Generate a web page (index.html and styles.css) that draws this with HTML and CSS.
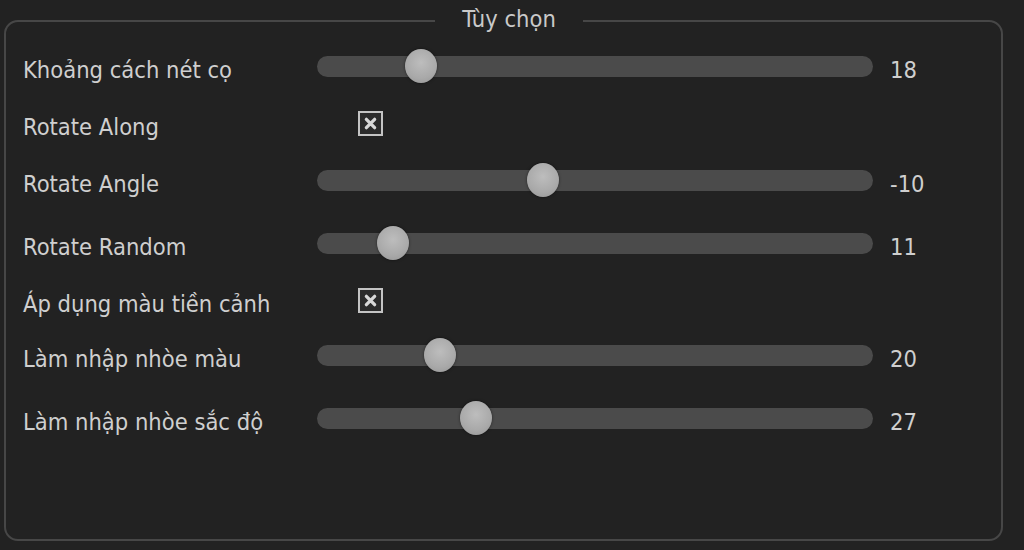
FILE: index.html
```html
<!DOCTYPE html>
<html lang="vi">
<head>
<meta charset="utf-8">
<title>Tùy chọn</title>
<link rel="stylesheet" href="styles.css">
</head>
<body>
<div class="panel">
  <div class="title">Tùy chọn</div>
  <div class="rows">
    <div class="label">Khoảng cách nét cọ</div>
    <div class="track"><span class="knob" style="left:18.7%"></span></div>
    <div class="value">18</div>

    <div class="label">Rotate Along</div>
    <div class="check-cell"><span class="check"><svg viewBox="0 0 20 20" width="20" height="20"><path d="M4.5 4.5 L15.5 15.5 M15.5 4.5 L4.5 15.5" stroke="#d8d8d8" stroke-width="4.4" stroke-linecap="round"/></svg></span></div>
    <div class="value"></div>

    <div class="label">Rotate Angle</div>
    <div class="track"><span class="knob" style="left:40.6%"></span></div>
    <div class="value">-10</div>

    <div class="label">Rotate Random</div>
    <div class="track"><span class="knob" style="left:13.7%"></span></div>
    <div class="value">11</div>

    <div class="label">Áp dụng màu tiền cảnh</div>
    <div class="check-cell"><span class="check"><svg viewBox="0 0 20 20" width="20" height="20"><path d="M4.5 4.5 L15.5 15.5 M15.5 4.5 L4.5 15.5" stroke="#d8d8d8" stroke-width="4.4" stroke-linecap="round"/></svg></span></div>
    <div class="value"></div>

    <div class="label">Làm nhập nhòe màu</div>
    <div class="track"><span class="knob" style="left:22.1%"></span></div>
    <div class="value">20</div>

    <div class="label">Làm nhập nhòe sắc độ</div>
    <div class="track"><span class="knob" style="left:28.6%"></span></div>
    <div class="value">27</div>
  </div>
</div>
</body>
</html>
```
FILE: styles.css
```css
html, body {
  margin: 0;
  padding: 0;
  background: #222222;
}
body {
  width: 1024px;
  height: 550px;
  overflow: hidden;
  font-family: "DejaVu Sans Condensed", "DejaVu Sans", sans-serif;
  font-size: 23.5px;
  color: #cfcfcf;
}
.panel {
  position: relative;
  box-sizing: border-box;
  margin: 20px 0 0 4px;
  width: 999px;
  height: 521px;
  border: 2px solid #474747;
  border-radius: 14px;
  padding: 15.5px 0 0 17px;
}
.title {
  position: absolute;
  top: -18px;
  left: 429px;
  width: 148px;
  text-align: center;
  background: #222222;
  color: #c9c9c9;
  line-height: 30px;
}
.rows {
  display: grid;
  grid-template-columns: 294px 556px auto;
  grid-template-rows: 57px 57px 57px 69px 45px 65px 61px;
  column-gap: 0;
  align-items: center;
}
.label {
  padding-top: 7px;
  white-space: nowrap;
}
.value {
  padding-top: 7px;
  padding-left: 17px;
}
.track {
  position: relative;
  height: 21px;
  border-radius: 10.5px;
  background: #4b4b4b;
}
.knob {
  position: absolute;
  top: 50%;
  width: 32px;
  height: 34px;
  border-radius: 50%;
  transform: translate(-50%, -50%);
  background: radial-gradient(circle at 50% 40%, #bdbdbd 0%, #a9a9a9 60%, #949494 100%);
  box-shadow: 0 0 3px rgba(0, 0, 0, 0.5);
}
.check-cell {
  padding-left: 41px;
  display: flex;
  align-items: center;
}
.check {
  box-sizing: border-box;
  width: 25px;
  height: 25px;
  border: 2px solid #c4c4c4;
  background: #2b2b2b;
  display: flex;
  align-items: center;
  justify-content: center;
}
.check svg {
  display: block;
  width: 15px;
  height: 15px;
}
```
